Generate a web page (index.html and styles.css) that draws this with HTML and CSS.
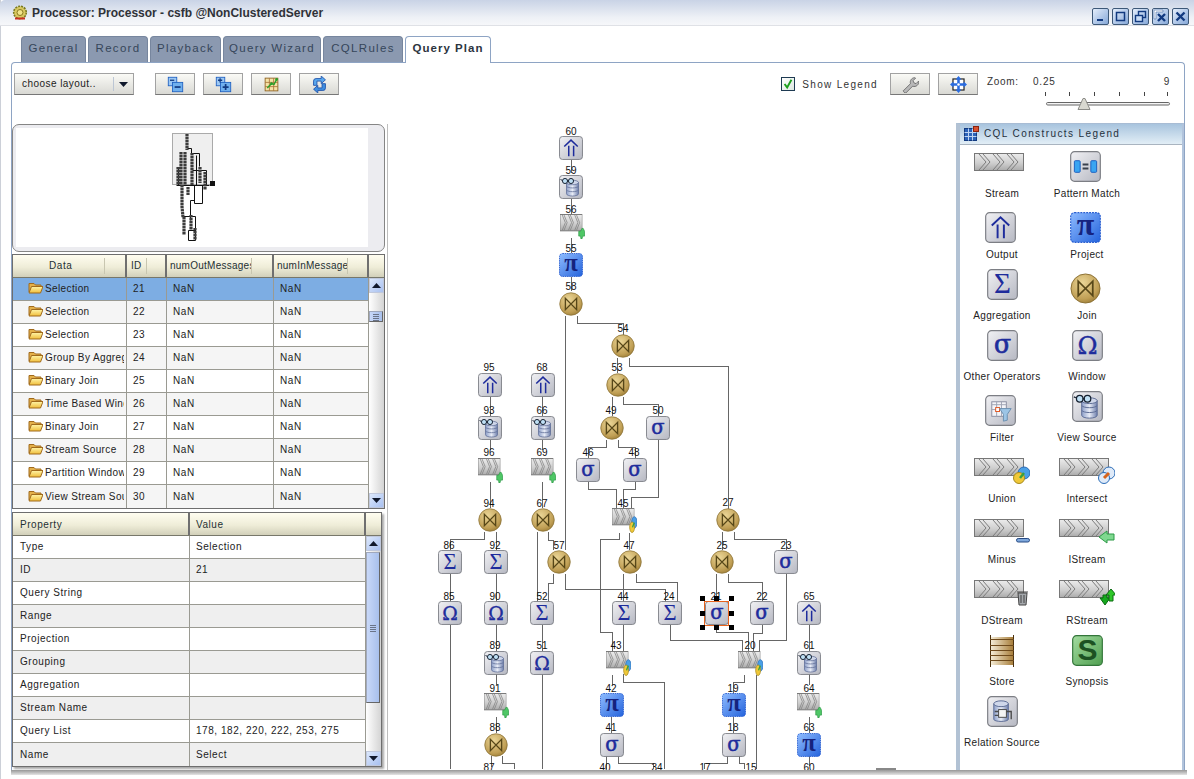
FILE: index.html
```html
<!DOCTYPE html>
<html lang="en">
<head>
<meta charset="utf-8">
<title>Processor: Processor - csfb @NonClusteredServer</title>
<link rel="stylesheet" href="styles.css">
</head>
<body>
<svg class="defs" width="0" height="0" aria-hidden="true">
  <defs>
    <linearGradient id="gTile" x1="0" y1="0" x2="1" y2="1"><stop offset="0" stop-color="#f1f1f4"/><stop offset="1" stop-color="#b6b8c2"/></linearGradient>
    <linearGradient id="gBlue" x1="0" y1="0" x2="1" y2="1"><stop offset="0" stop-color="#8fbcff"/><stop offset="1" stop-color="#2463dc"/></linearGradient>
    <linearGradient id="gStream" x1="0" y1="0" x2="0" y2="1"><stop offset="0" stop-color="#ececec"/><stop offset=".55" stop-color="#cfcfcf"/><stop offset="1" stop-color="#ababab"/></linearGradient>
    <radialGradient id="gJoin" cx=".4" cy=".3" r=".8"><stop offset="0" stop-color="#ead596"/><stop offset=".7" stop-color="#c09f55"/><stop offset="1" stop-color="#93742f"/></radialGradient>
    <linearGradient id="gStore" x1="0" y1="0" x2="1" y2="0"><stop offset="0" stop-color="#f7f0dc"/><stop offset="1" stop-color="#a57a35"/></linearGradient>
    <linearGradient id="gDb" x1="0" y1="0" x2="1" y2="0"><stop offset="0" stop-color="#8d9fc9"/><stop offset=".5" stop-color="#e8ecf6"/><stop offset="1" stop-color="#6f80ad"/></linearGradient>
    <linearGradient id="gSyn" x1="0" y1="0" x2="1" y2="1"><stop offset="0" stop-color="#a4dca0"/><stop offset="1" stop-color="#4f9f50"/></linearGradient>
    <linearGradient id="gFolder" x1="0" y1="0" x2="0" y2="1"><stop offset="0" stop-color="#fff5a8"/><stop offset="1" stop-color="#f0bd3a"/></linearGradient>

    <symbol id="tile" viewBox="0 0 32 32"><rect x=".7" y=".7" width="30.6" height="30.6" rx="4" fill="url(#gTile)" stroke="#7c7e84" stroke-width="1.2"/></symbol>
    <symbol id="i-sigma" viewBox="0 0 32 32"><use href="#tile"/><text x="16" y="24" class="glyph glyph-sigma">σ</text></symbol>
    <symbol id="i-sum" viewBox="0 0 32 32"><use href="#tile"/><text x="16" y="25" class="glyph glyph-thin">Σ</text></symbol>
    <symbol id="i-omega" viewBox="0 0 32 32"><use href="#tile"/><text x="16" y="25" class="glyph glyph-om">Ω</text></symbol>
    <symbol id="i-pi" viewBox="0 0 32 32"><rect x=".7" y=".7" width="30.6" height="30.6" rx="4" fill="url(#gBlue)" stroke="#2a5fd0" stroke-width="1.2" stroke-dasharray="2 1"/><text x="16" y="24" class="glyph glyph-pi">π</text></symbol>
    <symbol id="i-out" viewBox="0 0 32 32"><use href="#tile"/><path d="M7 14 16 5.500l9 8.500M13 13v14M19.500 13v14" fill="none" stroke="#1e2c9c" stroke-width="2"/></symbol>
    <symbol id="i-join" viewBox="0 0 32 32"><circle cx="16" cy="16" r="15" fill="url(#gJoin)" stroke="#8a7034"/><path d="M8.500 8.500v15L23.500 8.500v15z" fill="none" stroke="#574718" stroke-width="1.800"/></symbol>
    <symbol id="i-view" viewBox="0 0 32 32"><use href="#tile"/><path d="M10 10h16v15c0 4-16 4-16 0z" fill="url(#gDb)" stroke="#5d6c95"/><ellipse cx="18" cy="10" rx="8" ry="3" fill="#cfd7ea" stroke="#5d6c95"/><path d="M10 15c2 3 14 3 16 0M10 20c2 3 14 3 16 0" fill="none" stroke="#5d6c95"/><circle cx="8" cy="8" r="3.400" fill="#bfe0f5" stroke="#152030" stroke-width="1.300"/><circle cx="16" cy="8" r="3.400" fill="#bfe0f5" stroke="#152030" stroke-width="1.300"/><path d="M11 8h2M2 6l2 1" stroke="#152030" stroke-width="1.300"/></symbol>
    <symbol id="i-pattern" viewBox="0 0 32 32"><use href="#tile"/><rect x="4.500" y="10" width="6" height="12" rx="1" fill="#39a5f2" stroke="#1d5fc0"/><rect x="21.500" y="10" width="6" height="12" rx="1" fill="#39a5f2" stroke="#1d5fc0"/><path d="M13 14h6M13 18h6" stroke="#39404c" stroke-width="2"/></symbol>
    <symbol id="i-filter" viewBox="0 0 32 32"><use href="#tile"/><rect x="7" y="7" width="15" height="15" fill="#f4f4f8" stroke="#8a8ea0"/><path d="M7 10h15M7 15h15M12 7v15M17 7v15" stroke="#a0a4b4"/><rect x="11" y="13" width="4" height="4" fill="#fff" stroke="#e0521c"/><path d="M15 14h12l-4 6v6l-4 1v-7z" fill="#9cc5e6" stroke="#6c8fb0"/></symbol>
    <symbol id="i-rel" viewBox="0 0 32 32"><use href="#tile"/><path d="M7 8h15v16c0 3-15 3-15 0z" fill="url(#gDb)" stroke="#5d6c95"/><ellipse cx="14.500" cy="8" rx="7.500" ry="3" fill="#cfd7ea" stroke="#5d6c95"/><rect x="12" y="14" width="8" height="8" fill="#f4f4f4" stroke="#4a4a4a"/><path d="M8 16h4M8 20h4M20 16h5v8" fill="none" stroke="#4a4a4a" stroke-width="1.400"/></symbol>
    <symbol id="i-syn" viewBox="0 0 32 32"><rect x=".7" y=".7" width="30.6" height="30.6" rx="4" fill="url(#gSyn)" stroke="#33753a" stroke-width="1.200"/><text x="16" y="26" class="glyph-s">S</text></symbol>
    <symbol id="i-store" viewBox="0 0 24 32"><rect x="0" y="2" width="24" height="28" fill="url(#gStore)"/><path d="M.5 0v32M23.500 0v32" stroke="#4c3210"/><path d="M0 4.500h24M0 10.500h24M0 15.500h24M0 20.500h24M0 25.500h24" stroke="#6e4a1c"/></symbol>

    <symbol id="s-base" viewBox="0 0 56 26" preserveAspectRatio="none"><rect x=".5" y=".5" width="49" height="17" fill="url(#gStream)" stroke="#777"/><path d="M5 1l7 8-7 8M9 1l7 8-7 8M19 1l7 8-7 8M23 1l7 8-7 8M33 1l7 8-7 8M37 1l7 8-7 8" fill="none" stroke="#7c7c7c"/></symbol>
    <symbol id="i-stream" viewBox="0 0 56 26" preserveAspectRatio="none"><use href="#s-base"/></symbol>
    <symbol id="i-union" viewBox="0 0 56 26" preserveAspectRatio="none"><use href="#s-base"/><circle cx="50" cy="15" r="6" fill="#4aa0e6" stroke="#2a6cb8"/><circle cx="45" cy="20" r="5.500" fill="#f0c838" stroke="#a68a20"/><path d="M46 20l4-5" stroke="#3aa040" stroke-width="2.500"/></symbol>
    <symbol id="i-inter" viewBox="0 0 56 26" preserveAspectRatio="none"><use href="#s-base"/><circle cx="50" cy="15" r="6" fill="#dfeaf8" stroke="#2a6cb8"/><circle cx="45" cy="20" r="5.500" fill="#dfeaf8" stroke="#2a6cb8"/><path d="M45 20l5-5" stroke="#d8641c" stroke-width="3"/></symbol>
    <symbol id="i-minus" viewBox="0 0 56 26" preserveAspectRatio="none"><use href="#s-base"/><rect x="42.500" y="19.500" width="13" height="3.500" rx="1.700" fill="#7fa8dc" stroke="#274b84"/></symbol>
    <symbol id="i-istream" viewBox="0 0 56 26" preserveAspectRatio="none"><use href="#s-base"/><path d="M40 18l8-6v3h7v6h-7v3z" fill="#7fd88f" stroke="#2c9a46"/></symbol>
    <symbol id="i-dstream" viewBox="0 0 56 26" preserveAspectRatio="none"><use href="#s-base"/><path d="M44 13h9l-1 12h-7z" fill="#a4a8ac" stroke="#444"/><path d="M43 12h11M47 15v8M50 15v8" stroke="#444"/></symbol>
    <symbol id="i-rstream" viewBox="0 0 56 26" preserveAspectRatio="none"><use href="#s-base"/><path d="M41 18h3v-3h4v3h3l-5 7z" fill="#16a81e" stroke="#0a6a10"/><path d="M47 15l5-6 5 6h-3v6h-4v-6z" fill="#2fc82a" stroke="#0a6a10"/></symbol>
    <symbol id="i-rs-small" viewBox="0 0 56 26" preserveAspectRatio="none"><use href="#s-base"/><path d="M42 18h4l3-3h3l3 3v5h-4l-2 3h-2l-1-3h-4z" fill="#4fc766" stroke="#2c9a46"/></symbol>

    <symbol id="f-folder" viewBox="0 0 15 13"><path d="M1 11V2.500h5l1.500 1.500H13v2" fill="#e4b04a" stroke="#a06a1c"/><path d="M1 12l2.500-6.500H15L12.500 12z" fill="url(#gFolder)" stroke="#a06a1c"/></symbol>
    <symbol id="f-arrow" viewBox="0 0 9 5"><path d="M0 5 4.500 0 9 5z" fill="#10182c"/></symbol>
    <symbol id="f-arrow-d" viewBox="0 0 9 5"><path d="M0 0h9L4.500 5z" fill="#10182c"/></symbol>
  </defs>
</svg>

<header class="titlebar">
  <svg class="app-icon" viewBox="0 0 16 16"><circle cx="8" cy="7.500" r="6.300" fill="#d8c860" stroke="#7a7a20" stroke-width="1.600" stroke-dasharray="2 1"/><circle cx="8" cy="7.500" r="3" fill="#f2e48a" stroke="#8a7a20"/><path d="M3 13.500h10" stroke="#c83020" stroke-width="2"/></svg>
  <h1 class="title">Processor: Processor - csfb @NonClusteredServer</h1>
  <div class="win-buttons">
    <span class="win-btn"><svg viewBox="0 0 15 15"><path d="M4 11h6" stroke="#123a80" stroke-width="2"/></svg></span>
    <span class="win-btn"><svg viewBox="0 0 15 15"><rect x="3.500" y="3.500" width="8" height="8" fill="none" stroke="#123a80" stroke-width="1.500"/></svg></span>
    <span class="win-btn"><svg viewBox="0 0 15 15"><rect x="5.500" y="2.500" width="7" height="6" fill="none" stroke="#123a80" stroke-width="1.400"/><rect x="2.500" y="6.500" width="7" height="6" fill="#c9dcf4" stroke="#123a80" stroke-width="1.400"/></svg></span>
    <span class="win-btn"><svg viewBox="0 0 15 15"><path d="M1 1h9v2H3v7H1z" fill="#fff" stroke="#5a7cb0" stroke-width=".7"/><path d="M5 5l7 7M12 5l-7 7" stroke="#123a80" stroke-width="2.400"/></svg></span>
    <span class="win-btn"><svg viewBox="0 0 15 15"><path d="M3.500 3.500l8 8M11.500 3.500l-8 8" stroke="#123a80" stroke-width="2.400"/></svg></span>
  </div>
</header>

<nav class="tabs">
  <a class="tab tab-general">General</a>
  <a class="tab tab-record">Record</a>
  <a class="tab tab-playback">Playback</a>
  <a class="tab tab-wizard">Query Wizard</a>
  <a class="tab tab-rules">CQLRules</a>
  <a class="tab tab-plan active">Query Plan</a>
</nav>

<main class="panel">
  <div class="toolbar">
    <div class="combo"><span class="combo-text">choose layout..</span><span class="combo-arrow"><svg width="9" height="5"><use href="#f-arrow-d"/></svg></span></div>
    <button class="tool first-tool"><svg viewBox="0 0 20 20"><rect x="1.500" y="1.500" width="10" height="10" fill="#9cc8f4" stroke="#1d5fc0"/><rect x="6.500" y="7.500" width="12" height="11" fill="#6fb0ee" stroke="#1d5fc0"/><path d="M9 13h7" stroke="#123a80" stroke-width="2"/><path d="M3.500 5h5" stroke="#123a80" stroke-width="1.500"/></svg></button>
    <button class="tool"><svg viewBox="0 0 20 20"><rect x="1.500" y="1.500" width="10" height="10" fill="#9cc8f4" stroke="#1d5fc0"/><rect x="6.500" y="7.500" width="12" height="11" fill="#6fb0ee" stroke="#1d5fc0"/><path d="M9 13h7M12.500 9.500v7" stroke="#123a80" stroke-width="2"/><path d="M3.500 5h5M6 2.500v5" stroke="#123a80" stroke-width="1.500"/></svg></button>
    <button class="tool"><svg viewBox="0 0 20 20"><rect x="2.500" y="2.500" width="15" height="15" fill="#f6e2a6" stroke="#8a5e1c"/><path d="M2.500 7.500h15M2.500 12.500h15M7.500 2.500v15M12.500 2.500v15" stroke="#a8743a"/><path d="M5 14l5-5 3 1 3-6" fill="none" stroke="#2aa02a" stroke-width="1.600"/><circle cx="10" cy="9" r="1.600" fill="#2aa02a"/><circle cx="16" cy="4" r="1.600" fill="#2aa02a"/></svg></button>
    <button class="tool"><svg viewBox="0 0 20 20"><path d="M3 11V6a3 3 0 0 1 3-3h6V0l5 4.500L12 9V6H7v5z" fill="#59a8ee" stroke="#1d4fa8"/><path d="M17 9v5a3 3 0 0 1-3 3H8v3l-5-4.500L8 11v3h5V9z" fill="#3f8ee0" stroke="#1d4fa8"/></svg></button>

    <label class="legend-toggle"><span class="check"><svg viewBox="0 0 14 14"><path d="M3 7l3 4 5-9" fill="none" stroke="#1ea01e" stroke-width="2.200"/></svg></span><span class="legend-label">Show Legend</span></label>
    <button class="tool wrench"><svg viewBox="0 0 20 20"><path d="M2 17l8-8c-1-3 1-7 5-7l1 .5-3 3 1 2.500 2.500 1 3-3c1 4-3 7.500-7 6l-8 8c-1.500 0-3-1.500-3-3z" fill="#b8b8b8" stroke="#666"/></svg></button>
    <button class="tool"><svg viewBox="0 0 20 20"><rect x="3.500" y="3.500" width="13" height="13" fill="#fff" stroke="#222" stroke-width="1.400"/><path d="M10 3v14M3 10h14" stroke="#2a6ce0" stroke-width="3"/><path d="M10 0l3.500 4h-7zM10 20l3.500-4h-7zM0 10l4-3.500v7zM20 10l-4-3.500v7z" fill="#2a6ce0"/><circle cx="10" cy="10" r="1.500" fill="#fff"/></svg></button>
    <span class="zoom-label">Zoom:</span>
    <div class="slider">
      <div class="slider-range"><span>0.25</span><span>9</span></div>
      <svg class="slider-track" viewBox="0 0 138 22"><path d="M12.500 4v4M36.500 4v4M61.500 4v4M86.500 4v4M111.500 4v4M134.500 4v4" stroke="#444"/><rect x="13.500" y="14.500" width="123" height="2.500" rx="1.200" fill="#f4f4f4" stroke="#666"/><path d="M45 21.500l5-11h2l5 11z" fill="#d8d8d0" stroke="#8c8c88"/></svg>
    </div>
  </div>

  <div class="workspace">
    <section class="left">
      <div class="overview">
        <svg class="overview-map" viewBox="16 128 352 119">
          <rect x="172.500" y="133.500" width="40" height="51" fill="#efefef" stroke="#aaa"/>
          <path class="mini-thin" d="M187.500 148.500h4v5h8v13M192.500 170.500h14v15M176.500 185.500h33M202.500 185.500v18h-8v-18M190.500 200.500h4M190.500 200.500v20M183.500 216.500h12v24h-7v-10h7M178.500 167.500v18M196.500 155.500v30"/>
          <path class="mini-dots" d="M187 134v16M181 152v33M185 152v33M178 167v18M192 153v32M200 167v16M205 172v18M182 185v22l1 10M184 217v18M188 187v8M195 228v12M191 215v15"/>
          <rect x="210" y="181" width="5" height="5" fill="#111"/>
        </svg>
      </div>

      <div class="grid-box ops">
        <div class="g-head ops-cols">
          <div class="h-cell center"><span class="h-clip h-data">Data</span></div>
          <div class="h-cell"><span class="h-clip h-id">ID</span></div>
          <div class="h-cell"><span class="h-clip h-out">numOutMessages</span></div>
          <div class="h-cell"><span class="h-clip h-in">numInMessages</span></div>
          <div></div>
        </div>
        <div class="g-body">
          <div class="g-rows">
            <div class="g-row ops-row selected"><div class="cell name"><svg class="folder"><use href="#f-folder"/></svg><span>Selection</span></div><div class="cell num">21</div><div class="cell nan">NaN</div><div class="cell nan">NaN</div></div>
            <div class="g-row ops-row alt"><div class="cell name"><svg class="folder"><use href="#f-folder"/></svg><span>Selection</span></div><div class="cell num">22</div><div class="cell nan">NaN</div><div class="cell nan">NaN</div></div>
            <div class="g-row ops-row"><div class="cell name"><svg class="folder"><use href="#f-folder"/></svg><span>Selection</span></div><div class="cell num">23</div><div class="cell nan">NaN</div><div class="cell nan">NaN</div></div>
            <div class="g-row ops-row alt"><div class="cell name"><svg class="folder"><use href="#f-folder"/></svg><span>Group By Aggregation</span></div><div class="cell num">24</div><div class="cell nan">NaN</div><div class="cell nan">NaN</div></div>
            <div class="g-row ops-row"><div class="cell name"><svg class="folder"><use href="#f-folder"/></svg><span>Binary Join</span></div><div class="cell num">25</div><div class="cell nan">NaN</div><div class="cell nan">NaN</div></div>
            <div class="g-row ops-row alt"><div class="cell name"><svg class="folder"><use href="#f-folder"/></svg><span>Time Based Window</span></div><div class="cell num">26</div><div class="cell nan">NaN</div><div class="cell nan">NaN</div></div>
            <div class="g-row ops-row"><div class="cell name"><svg class="folder"><use href="#f-folder"/></svg><span>Binary Join</span></div><div class="cell num">27</div><div class="cell nan">NaN</div><div class="cell nan">NaN</div></div>
            <div class="g-row ops-row alt"><div class="cell name"><svg class="folder"><use href="#f-folder"/></svg><span>Stream Source</span></div><div class="cell num">28</div><div class="cell nan">NaN</div><div class="cell nan">NaN</div></div>
            <div class="g-row ops-row"><div class="cell name"><svg class="folder"><use href="#f-folder"/></svg><span>Partition Window</span></div><div class="cell num">29</div><div class="cell nan">NaN</div><div class="cell nan">NaN</div></div>
            <div class="g-row ops-row alt"><div class="cell name"><svg class="folder"><use href="#f-folder"/></svg><span>View Stream Source</span></div><div class="cell num">30</div><div class="cell nan">NaN</div><div class="cell nan">NaN</div></div>
          </div>
          <div class="scroll">
            <span class="sb-btn"><svg width="9" height="5"><use href="#f-arrow"/></svg></span>
            <div class="sb-track"><span class="sb-thumb sb-thumb-small"></span></div>
            <span class="sb-btn"><svg width="9" height="5"><use href="#f-arrow-d"/></svg></span>
          </div>
        </div>
      </div>

      <div class="grid-box props">
        <div class="g-head props-cols">
          <div class="h-cell"><span class="h-plain">Property</span></div>
          <div class="h-cell"><span class="h-plain h-value">Value</span></div>
          <div></div>
        </div>
        <div class="g-body">
          <div class="g-rows">
            <div class="g-row props-row"><div class="cell pk">Type</div><div class="cell pv">Selection</div></div>
            <div class="g-row props-row alt2"><div class="cell pk">ID</div><div class="cell pv">21</div></div>
            <div class="g-row props-row"><div class="cell pk">Query String</div><div class="cell pv"></div></div>
            <div class="g-row props-row alt2"><div class="cell pk">Range</div><div class="cell pv"></div></div>
            <div class="g-row props-row"><div class="cell pk">Projection</div><div class="cell pv"></div></div>
            <div class="g-row props-row alt2"><div class="cell pk">Grouping</div><div class="cell pv"></div></div>
            <div class="g-row props-row"><div class="cell pk">Aggregation</div><div class="cell pv"></div></div>
            <div class="g-row props-row alt2"><div class="cell pk">Stream Name</div><div class="cell pv"></div></div>
            <div class="g-row props-row"><div class="cell pk">Query List</div><div class="cell pv">178, 182, 220, 222, 253, 275</div></div>
            <div class="g-row props-row alt2"><div class="cell pk">Name</div><div class="cell pv">Select</div></div>
          </div>
          <div class="scroll">
            <span class="sb-btn"><svg width="9" height="5"><use href="#f-arrow"/></svg></span>
            <div class="sb-track"><span class="sb-thumb sb-thumb-large"></span></div>
            <span class="sb-btn"><svg width="9" height="5"><use href="#f-arrow-d"/></svg></span>
          </div>
        </div>
      </div>
    </section>

    <section class="graph">
      <svg class="graph-canvas" viewBox="388 124 568 646">
        <path class="edges" d="M571.500 160v13M571.500 199v15M571.500 238v15M571.500 277v14
          M565.500 316v234M577.500 316v7h46v12M617.500 358v15M629.500 358v8h99v143
          M612.500 397v19M623.500 397v7h35v12M606.500 440v7h-18v11M618.500 440v7h17v11
          M588.500 482v7h28v19M635.500 482v7h-12v19M658.500 440v57h-27v11
          M619.500 533v6h-19v93h12v19M629.500 533v17
          M490.500 397v19M490.500 440v10M490.500 482v26M542.500 397v19M542.500 440v10M542.500 482v26
          M484.500 532v7h-34v11M496.500 532v18M450.500 574v28M496.500 574v28M450.500 625v144M496.500 625v26M496.500 674v11M496.500 717v16
          M491.500 756v11M502.500 756v7h12v6
          M537.500 532v70M548.500 532v8h5v10M553.500 574v9h-5v19M565.500 574v15h100v13M542.500 625v26M542.500 674v95
          M623.500 574v28M636.500 574v8h41v20M623.500 625v26M670.500 625v15h72v11
          M612.500 675v10M623.500 674v8h41v87M611.500 717v16M606.500 756v13M618.500 756v7h35v6
          M722.500 532v18M734.500 532v7h52v11M716.500 574v27M728.500 574v8h34v19M786.500 574v66h-27v11
          M716.500 625v7h32v19M762.500 625v8h-9v18M744.500 675v7h-11v12M756.500 675v94M733.500 717v16
          M727.500 756v7h-23v6M739.500 756v7h5v6M809.500 625v26M809.500 674v11M809.500 717v16M809.500 756v10"/>

        <use href="#i-out" x="559" y="136" width="24" height="24"/>
        <use href="#i-view" x="559" y="175" width="24" height="24"/>
        <use href="#i-rs-small" x="560" y="214" width="25" height="25"/>
        <use href="#i-pi" x="559" y="253" width="24" height="24"/>
        <use href="#i-join" x="559" y="292" width="24" height="24"/>
        <use href="#i-join" x="611" y="334" width="24" height="24"/>
        <use href="#i-join" x="606" y="373" width="24" height="24"/>
        <use href="#i-join" x="600" y="416" width="24" height="24"/>
        <use href="#i-sigma" x="646" y="416" width="24" height="24"/>
        <use href="#i-sigma" x="576" y="458" width="24" height="24"/>
        <use href="#i-sigma" x="623" y="458" width="24" height="24"/>
        <use href="#i-union" x="612" y="508" width="25" height="25"/>
        <use href="#i-out" x="478" y="373" width="24" height="24"/>
        <use href="#i-view" x="478" y="416" width="24" height="24"/>
        <use href="#i-rs-small" x="478" y="458" width="25" height="25"/>
        <use href="#i-join" x="478" y="508" width="24" height="24"/>
        <use href="#i-out" x="531" y="373" width="24" height="24"/>
        <use href="#i-view" x="531" y="416" width="24" height="24"/>
        <use href="#i-rs-small" x="531" y="458" width="25" height="25"/>
        <use href="#i-join" x="531" y="508" width="24" height="24"/>
        <use href="#i-sum" x="438" y="550" width="24" height="24"/>
        <use href="#i-sum" x="484" y="550" width="24" height="24"/>
        <use href="#i-join" x="547" y="550" width="24" height="24"/>
        <use href="#i-join" x="618" y="550" width="24" height="24"/>
        <use href="#i-join" x="716" y="508" width="24" height="24"/>
        <use href="#i-join" x="710" y="550" width="24" height="24"/>
        <use href="#i-sigma" x="774" y="550" width="24" height="24"/>
        <use href="#i-omega" x="438" y="601" width="24" height="24"/>
        <use href="#i-omega" x="484" y="601" width="24" height="24"/>
        <use href="#i-sum" x="530" y="601" width="24" height="24"/>
        <use href="#i-sum" x="612" y="601" width="24" height="24"/>
        <use href="#i-sum" x="658" y="601" width="24" height="24"/>
        <use href="#i-sigma" x="705" y="601" width="24" height="24"/>
        <use href="#i-sigma" x="750" y="601" width="24" height="24"/>
        <use href="#i-out" x="797" y="601" width="24" height="24"/>
        <use href="#i-view" x="484" y="651" width="24" height="24"/>
        <use href="#i-omega" x="530" y="651" width="24" height="24"/>
        <use href="#i-union" x="606" y="651" width="25" height="25"/>
        <use href="#i-union" x="738" y="651" width="25" height="25"/>
        <use href="#i-view" x="797" y="651" width="24" height="24"/>
        <use href="#i-rs-small" x="484" y="693" width="25" height="25"/>
        <use href="#i-pi" x="600" y="693" width="24" height="24"/>
        <use href="#i-pi" x="722" y="693" width="24" height="24"/>
        <use href="#i-rs-small" x="797" y="693" width="25" height="25"/>
        <use href="#i-join" x="484" y="733" width="24" height="24"/>
        <use href="#i-sigma" x="600" y="733" width="24" height="24"/>
        <use href="#i-sigma" x="722" y="733" width="24" height="24"/>
        <use href="#i-pi" x="797" y="733" width="24" height="24"/>

        <g class="labels"><text x="716" y="600">21</text></g>
        <rect class="sel" x="704.500" y="601.500" width="24" height="24"/>
        <path class="handles" d="M700 596h5v5h-5zM714 596h5v5h-5zM729 596h5v5h-5zM700 611h5v5h-5zM729 611h5v5h-5zM700 625h5v5h-5zM714 625h5v5h-5zM729 625h5v5h-5z"/>
        <rect class="sliver" x="876" y="768" width="20" height="2"/>

        <g class="labels">
          <text x="571" y="135">60</text><text x="571" y="174">59</text><text x="571" y="213">56</text><text x="571" y="252">55</text><text x="571" y="290">58</text>
          <text x="623" y="332">54</text><text x="617" y="371">53</text><text x="611" y="414">49</text><text x="658" y="414">50</text><text x="588" y="456">46</text><text x="634" y="456">48</text><text x="623" y="507">45</text>
          <text x="489" y="371">95</text><text x="489" y="414">93</text><text x="489" y="456">96</text><text x="489" y="507">94</text>
          <text x="542" y="371">68</text><text x="542" y="414">66</text><text x="542" y="456">69</text><text x="542" y="507">67</text>
          <text x="449" y="549">86</text><text x="495" y="549">92</text><text x="559" y="549">57</text><text x="629" y="549">47</text>
          <text x="728" y="506">27</text><text x="722" y="549">25</text><text x="786" y="549">23</text>
          <text x="449" y="600">85</text><text x="495" y="600">90</text><text x="542" y="600">52</text><text x="623" y="600">44</text><text x="669" y="600">24</text><text x="762" y="600">22</text><text x="809" y="600">65</text>
          <text x="495" y="649">89</text><text x="542" y="649">51</text><text x="616" y="649">43</text><text x="750" y="649">20</text><text x="809" y="649">61</text>
          <text x="495" y="692">91</text><text x="611" y="692">42</text><text x="733" y="692">19</text><text x="809" y="692">64</text>
          <text x="495" y="731">88</text><text x="611" y="731">41</text><text x="733" y="731">18</text><text x="809" y="731">63</text>
          <text x="489" y="771">87</text><text x="605" y="771">40</text><text x="657" y="771">34</text><text x="705" y="771">17</text><text x="751" y="771">15</text><text x="809" y="771">60</text>
        </g>
      </svg>
    </section>

    <aside class="legend">
      <div class="legend-head">
        <svg class="legend-icon" viewBox="0 0 15 15"><rect x=".5" y="2.500" width="12" height="12" fill="#2b62b8" stroke="#123a80"/><path d="M.5 6.500h12M.5 10.500h12M4.500 2.500v12M8.500 2.500v12" stroke="#bcd4f4"/><rect x="9.500" y=".5" width="5" height="5" fill="#d85030" stroke="#8a2410"/></svg>
        <span>CQL Constructs Legend</span>
      </div>
      <div class="legend-grid">
        <div class="item"><div class="slot"><svg class="ico-s"><use href="#i-stream"/></svg></div><span>Stream</span></div>
        <div class="item"><div class="slot"><svg class="ico off-l"><use href="#i-pattern"/></svg></div><span>Pattern Match</span></div>
        <div class="item"><div class="slot"><svg class="ico off-l"><use href="#i-out"/></svg></div><span>Output</span></div>
        <div class="item"><div class="slot"><svg class="ico off-l"><use href="#i-pi"/></svg></div><span>Project</span></div>
        <div class="item"><div class="slot"><svg class="ico lift"><use href="#i-sum"/></svg></div><span>Aggregation</span></div>
        <div class="item"><div class="slot"><svg class="ico off-l"><use href="#i-join"/></svg></div><span>Join</span></div>
        <div class="item"><div class="slot"><svg class="ico lift"><use href="#i-sigma"/></svg></div><span>Other Operators</span></div>
        <div class="item"><div class="slot"><svg class="ico lift"><use href="#i-omega"/></svg></div><span>Window</span></div>
        <div class="item"><div class="slot"><svg class="ico off-l"><use href="#i-filter"/></svg></div><span>Filter</span></div>
        <div class="item"><div class="slot"><svg class="ico lift"><use href="#i-view"/></svg></div><span>View Source</span></div>
        <div class="item"><div class="slot"><svg class="ico-s"><use href="#i-union"/></svg></div><span>Union</span></div>
        <div class="item"><div class="slot"><svg class="ico-s"><use href="#i-inter"/></svg></div><span>Intersect</span></div>
        <div class="item"><div class="slot"><svg class="ico-s"><use href="#i-minus"/></svg></div><span>Minus</span></div>
        <div class="item"><div class="slot"><svg class="ico-s"><use href="#i-istream"/></svg></div><span>IStream</span></div>
        <div class="item"><div class="slot"><svg class="ico-s"><use href="#i-dstream"/></svg></div><span>DStream</span></div>
        <div class="item"><div class="slot"><svg class="ico-s"><use href="#i-rstream"/></svg></div><span>RStream</span></div>
        <div class="item"><div class="slot"><svg class="ico-store lift"><use href="#i-store"/></svg></div><span>Store</span></div>
        <div class="item"><div class="slot"><svg class="ico lift"><use href="#i-syn"/></svg></div><span>Synopsis</span></div>
        <div class="item"><div class="slot"><svg class="ico lift"><use href="#i-rel"/></svg></div><span>Relation Source</span></div>
      </div>
    </aside>
  </div>
</main>
<div class="panel-foot"></div>
</body>
</html>
```
FILE: styles.css
```css
* { box-sizing: border-box; }
html, body { margin: 0; height: 779px; overflow: hidden; }
body {
  width: 1194px;
  display: flex;
  flex-direction: column;
  background: #fff;
  box-shadow: inset 1px 0 #ccd0d8;
  font-family: "Liberation Sans", Arial, sans-serif;
  font-size: 10px;
  color: #222;
  letter-spacing: .55px;
}
.defs { display: block; flex: none; }
.glyph { font-family: "DejaVu Serif", serif; font-weight: 400; font-size: 26px; fill: #1e2c9c; text-anchor: middle; letter-spacing: 0; }
.glyph-sigma { stroke: #1e2c9c; stroke-width: .7px; }
.glyph-thin { font-family: "Liberation Serif", serif; font-size: 30px; }
.glyph-om { font-size: 25px; stroke: #1e2c9c; stroke-width: .4px; }
.glyph-pi { font-family: "Liberation Serif", serif; font-weight: 700; fill: #15237e; font-size: 33px; }
.glyph-s { font-family: "Liberation Sans", sans-serif; font-weight: 700; font-size: 31px; fill: #1c5222; text-anchor: middle; letter-spacing: 0; }
.mini-dots { fill: none; stroke: #3c3c3c; stroke-width: 3.2px; stroke-dasharray: 2.4 .6; }
.mini-thin { fill: none; stroke: #111; stroke-width: 1px; }

/* title bar */
.titlebar {
  height: 26px;
  flex: none;
  display: flex;
  align-items: center;
  padding: 0 5px 0 12px;
  background: linear-gradient(#c9d3e6, #eef1f6 70%, #f6f7fa);
  border-bottom: 1px solid #dfe1e6;
  border-top-left-radius: 5px;
}
.app-icon { width: 16px; height: 16px; margin-right: 4px; }
.title { margin: 0; font-size: 12px; font-weight: 700; letter-spacing: 0; color: #2f3238; }
.win-buttons { margin-left: auto; display: flex; gap: 3px; margin-top: 7px; }
.win-btn { width: 17px; height: 17px; display: block; background: linear-gradient(135deg, #e4eefc, #86a8d8); border: 1px solid #3d5878; border-radius: 2px; }
.win-btn svg { display: block; width: 15px; height: 15px; }

/* tabs */
.tabs { flex: none; display: flex; gap: 2px; height: 26px; margin: 10px 0 0 21px; }
.tab {
  height: 26px;
  padding-bottom: 4px;
  display: flex;
  align-items: center;
  justify-content: center;
  font-size: 11.5px;
  letter-spacing: 1.3px;
  color: #36465a;
  background: #8b99b0;
  border: 1px solid #77869e;
  border-bottom: none;
  border-radius: 4px 4px 0 0;
}
.tab-general { width: 65px; }
.tab-record { width: 60px; }
.tab-playback { width: 71px; }
.tab-wizard { width: 98px; }
.tab-rules { width: 80px; }
.tab-plan { width: 86px; }
.tab.active {
  height: 27px;
  background: #fff;
  color: #2c3440;
  font-weight: 700;
  letter-spacing: 1.05px;
  border-color: #8ea4c4;
  z-index: 1;
}

/* main panel */
.panel {
  flex: none;
  height: 708px;
  margin: 0 9px 0 11px;
  background: #fff;
  border: 1px solid #8ea4c4;
  border-bottom: none;
  border-radius: 4px 4px 0 0;
  display: flex;
  flex-direction: column;
}
.panel-foot { flex: none; height: 5px; margin-left: 11px; margin-right: 7px; background: linear-gradient(#979797, #e4e4e4); }
.toolbar {
  flex: none;
  height: 61px;
  display: flex;
  align-items: flex-start;
  padding: 10px 13px 0 2px;
}
.combo {
  width: 120px;
  height: 22px;
  display: flex;
  align-items: center;
  background: linear-gradient(#fafaf6, #d9d9d4);
  border: 1px solid #a2a2a2;
  border-bottom-color: #777;
}
.combo-text { width: 99px; padding-left: 7px; border-right: 1px solid #bcc6d4; line-height: 14px; letter-spacing: .45px; }
.combo-arrow { flex: 1; display: flex; justify-content: center; }
.combo-arrow svg { display: block; }
.tool {
  width: 40px;
  height: 22px;
  margin: 0 0 0 8px;
  padding: 2px 0;
  display: flex;
  justify-content: center;
  background: linear-gradient(#fafaf6, #d9d9d4);
  border: 1px solid #a2a2a2;
  border-bottom-color: #777;
}
.tool svg { width: 17px; height: 17px; display: block; }
.first-tool { margin-left: 21px; }
.legend-toggle { display: flex; align-items: center; margin-left: auto; height: 22px; }
.check { width: 14px; height: 14px; border: 1px solid #1e3a52; background: linear-gradient(135deg, #fff, #dde8e0); display: block; }
.check svg { display: block; width: 12px; height: 12px; }
.legend-label { margin-left: 7px; letter-spacing: 1.32px; color: #333; }
.wrench { margin-left: 12px; }
.zoom-label { margin: 3px 0 0 9px; width: 46px; letter-spacing: .7px; line-height: 12px; color: #333; }
.slider { width: 138px; margin-top: 3px; }
.slider-range { display: flex; justify-content: space-between; line-height: 12px; letter-spacing: .8px; color: #333; padding-right: 1px; }
.slider-track { display: block; width: 138px; height: 22px; }

.workspace { flex: none; height: 646px; display: flex; }

/* left column */
.left { flex: none; width: 373px; display: flex; flex-direction: column; margin-right: 2px; }
.overview {
  height: 128px;
  margin-bottom: 2px;
  padding: 3px 16px 4px 3px;
  background: #ececf0;
  border: 1px solid #858585;
  border-radius: 7px;
}
.overview-map { display: block; width: 352px; height: 119px; background: #fff; }

.grid-box { height: 255px; flex: none; border: 1px solid #6e6e6e; background: #fff; display: flex; flex-direction: column; }
.ops { width: 373px; margin-bottom: 3px; }
.props { width: 370px; box-shadow: 2px 2px 2px #a8a8a8; }
.g-head {
  flex: none;
  height: 23px;
  display: grid;
  align-items: stretch;
  background: linear-gradient(#fffdf0, #efedd8 55%, #d2d0ba);
  border-bottom: 1px solid #77776a;
  color: #1e3034;
}
.ops-cols { grid-template-columns: 114px 40px 107px 95px 15px; }
.props-cols { grid-template-columns: 177px 176px 15px; }
.h-cell { border-right: 2px solid #6f6f6f; display: flex; align-items: center; min-width: 0; overflow: hidden; padding-left: 3px; letter-spacing: .25px; }
.h-clip { display: block; height: 16px; line-height: 16px; overflow: hidden; white-space: nowrap; border-right: 1px solid #c8c6b0; }
.h-data { width: 92px; padding-left: 36px; letter-spacing: .55px; }
.h-id { width: 15px; padding-left: 1px; box-sizing: content-box; }
.h-out { width: 82px; }
.h-in { width: 71px; }
.h-plain { padding-left: 4px; letter-spacing: .55px; }
.h-value { padding-left: 3px; }
.h-cell.center { padding-left: 0; }
.g-body { flex: 1; display: flex; min-height: 0; }
.g-rows { flex: 1; min-width: 0; }
.g-row { height: 23px; display: grid; background: #fff; border-bottom: 1px solid #9a9a92; }
.ops-row { grid-template-columns: 114px 40px 107px 95px; }
.props-row { grid-template-columns: 177px 176px; }
.g-row.alt { background: #f5f5f5; }
.g-row.alt2 { background: #efefef; }
.g-row.selected { background: #7dade3; }
.g-row:last-child { border-bottom: none; }
.cell { display: flex; align-items: center; border-right: 1px solid #9a9a92; white-space: nowrap; overflow: hidden; line-height: 22px; }
.cell.name { padding-left: 15px; letter-spacing: .38px; }
.cell.name span { display: block; width: 79px; overflow: hidden; margin-left: 2px; }
.folder { width: 15px; height: 13px; flex: none; margin-top: -3px; }
.cell.num { padding-left: 6px; }
.cell.nan { padding-left: 6px; }
.cell.pk { padding-left: 7px; }
.cell.pv { padding-left: 6px; }

.scroll { flex: none; width: 15px; display: flex; flex-direction: column; background: linear-gradient(90deg, #fff, #d4d4d4); }
.sb-btn { flex: none; width: 15px; height: 15px; display: flex; align-items: center; justify-content: center; background: linear-gradient(135deg, #dce8fc, #a8c0f0); border: 1px solid #c0c8dc; }
.sb-track { flex: 1; min-height: 0; }
.sb-thumb { display: block; margin-right: 1px; background: linear-gradient(90deg, #c8d8f8, #a8c0ec); border: 1px solid #a0a8bc; border-right-color: #666; border-bottom-color: #666; position: relative; }
.sb-thumb-small { height: 11px; margin-top: 18px; }
.sb-thumb-large { height: 151px; margin-top: 1px; }
.sb-thumb::after { content: ""; position: absolute; left: 3px; right: 3px; top: 50%; height: 7px; margin-top: -3px; background: repeating-linear-gradient(#6a7488 0 1px, transparent 1px 2px); }

/* graph */
.graph { flex: none; width: 569px; border-left: 1px solid #bdbdbd; overflow: hidden; }
.graph-canvas { display: block; width: 568px; height: 646px; overflow: hidden; }
.edges { fill: none; stroke: #666; stroke-width: 1; shape-rendering: crispEdges; }
.labels text { font-size: 10px; letter-spacing: 0; text-anchor: middle; fill: #111; }
.sel { fill: none; stroke: #e8641e; stroke-width: 1; shape-rendering: crispEdges; }
.handles { fill: #000; }
.sliver { fill: #888; }

/* legend */
.legend { flex: 1; min-width: 0; margin-top: -1px; border-left: 4px solid #b2c2d4; border-right: 2px solid #b2c4dc; border-top: 1px solid #a8bcd4; background: #fff; }
.legend-head {
  height: 21px;
  padding: 0 0 2px 4px;
  display: flex;
  align-items: center;
  background: linear-gradient(#a8c4de, #e2eef6);
  border-bottom: 1px solid #a9b4c0;
  letter-spacing: 1.4px;
  color: #24303c;
}
.legend-icon { width: 15px; height: 15px; margin-right: 5px; }
.legend-grid { display: grid; grid-template-columns: 84px 86px; row-gap: 11px; padding: 6px 0 0 0; justify-content: start; }
.item { height: 50px; display: flex; flex-direction: column; align-items: center; letter-spacing: .32px; white-space: nowrap; }
.item span { line-height: 12px; color: #222; }
.slot { height: 31px; margin-bottom: 6px; display: flex; justify-content: center; }
.ico { width: 31px; height: 31px; display: block; }
.ico-s { width: 56px; height: 26px; display: block; margin-top: 2px; }
.ico-store { width: 24px; height: 32px; display: block; }
.off-l { margin-right: 4px; }
.lift { margin-top: -4px; }
```
